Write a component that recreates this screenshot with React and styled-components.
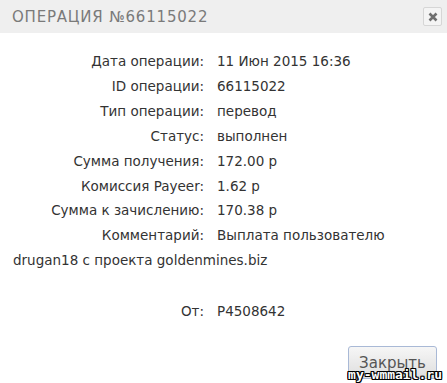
import React from 'react';
import { styled, createGlobalStyle } from 'styled-components';

const GlobalStyle = createGlobalStyle`
  html, body {
    margin: 0;
    padding: 0;
    background: #ffffff;
  }
  body {
    font-family: "DejaVu Sans", "Liberation Sans", sans-serif;
  }
`;

const rows = [
  { label: 'Дата операции:', value: '11 Июн 2015 16:36' },
  { label: 'ID операции:', value: '66115022' },
  { label: 'Тип операции:', value: 'перевод' },
  { label: 'Статус:', value: 'выполнен' },
  { label: 'Сумма получения:', value: '172.00 р' },
  { label: 'Комиссия Payeer:', value: '1.62 р' },
  { label: 'Сумма к зачислению:', value: '170.38 р' },
  { label: 'Комментарий:', value: 'Выплата пользователю drugan18 с проекта goldenmines.biz' },
];

export default function App() {
  return (
    <>
      <GlobalStyle />
      <Dialog>
        <Header>
          <Title>Операция №66115022</Title>
          <CloseButton aria-label="close">
            <svg width="10" height="10" viewBox="0 0 10 10">
              <path d="M1.5 1.5 L8.5 8.5 M8.5 1.5 L1.5 8.5" stroke="#6f6f6f" strokeWidth="2.6" strokeLinecap="butt" />
            </svg>
          </CloseButton>
        </Header>
        <Body>
          {rows.map((row) => (
            <Row key={row.label}>
              <Label>{row.label}</Label>
              <Value>{row.value}</Value>
            </Row>
          ))}
          <Spacer />
          <Row>
            <Label>От:</Label>
            <Value>P4508642</Value>
          </Row>
        </Body>
        <Footer>
          <Button>Закрыть</Button>
        </Footer>
        <Watermark>my-wmmail.ru</Watermark>
      </Dialog>
    </>
  );
}

const Dialog = styled.div`
  position: relative;
  width: 447px;
  height: 383px;
  overflow: hidden;
  background: #ffffff;
`;

const Header = styled.div`
  height: 33px;
  background: #efefef;
  display: flex;
  align-items: center;
  justify-content: space-between;
  padding: 0 5px 0 12px;
`;

const Title = styled.div`
  font-family: "DejaVu Sans", sans-serif;
  font-size: 15px;
  text-transform: uppercase;
  letter-spacing: 0.8px;
  color: #7a7a7a;
`;

const CloseButton = styled.div`
  width: 17px;
  height: 17px;
  border: 1px solid #d6d6d6;
  border-radius: 2px;
  background: #f4f4f4;
  display: flex;
  align-items: center;
  justify-content: center;
`;

const Body = styled.div`
  padding: 16px 13px 0 13px;
  font-size: 13.5px;
  line-height: 24.9px;
  color: #333333;
`;

const Row = styled.div``;

const Label = styled.span`
  display: inline-block;
  width: 191px;
  text-align: right;
  margin-right: 13px;
`;

const Value = styled.span``;

const Spacer = styled.div`
  height: 26px;
`;

const Footer = styled.div`
  display: flex;
  justify-content: flex-end;
  padding: 22px 10px 0 0;
`;

const Button = styled.div`
  width: 89px;
  height: 33px;
  box-sizing: border-box;
  border: 1px solid #a9b9d6;
  border-radius: 3px;
  background: linear-gradient(#f6f6f6, #dedede);
  display: flex;
  align-items: center;
  justify-content: center;
  font-family: "DejaVu Sans", sans-serif;
  font-size: 15px;
  color: #555555;
`;

const Watermark = styled.div`
  position: absolute;
  right: 5px;
  bottom: 1px;
  font-family: "DejaVu Sans Mono", monospace;
  font-weight: bold;
  font-size: 13px;
  line-height: 15px;
  color: #ffffff;
  text-shadow: 1px 0 0 #000, -1px 0 0 #000, 0 1px 0 #000, 0 -1px 0 #000,
    1px 1px 0 #000, -1px -1px 0 #000, 1px -1px 0 #000, -1px 1px 0 #000;
`;
